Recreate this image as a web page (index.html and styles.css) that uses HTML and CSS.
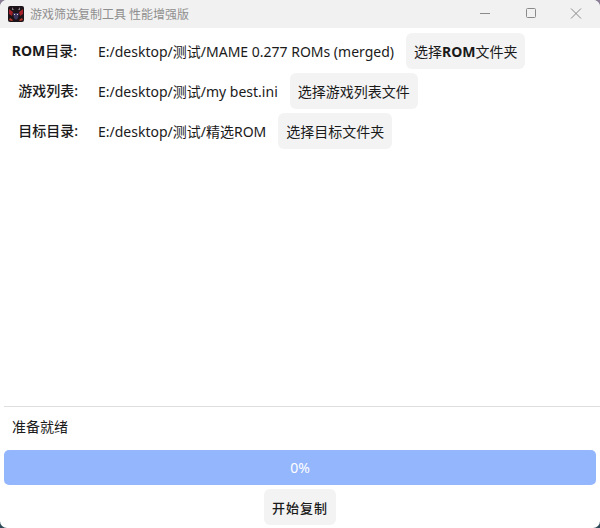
FILE: index.html
```html
<!DOCTYPE html>
<html lang="zh-CN">
<head>
  <meta charset="UTF-8" />
  <title>游戏筛选复制工具 性能增强版</title>
  <link rel="stylesheet" href="styles.css">
</head>
<body>
  <div class="window">
    <div class="titlebar">
      <svg class="app-icon" width="16" height="16" viewBox="0 0 16 16">
        <rect width="16" height="16" rx="2" fill="#1c1418"/>
        <path d="M1 3l4 3-1 4-3-2zM15 3l-4 3 1 4 3-2z" fill="#a3212a"/>
        <path d="M5 7h6l-1 5-2 2-2-2z" fill="#3b3560"/>
        <path d="M6 8h1v1H6zM9 8h1v1H9z" fill="#e8d8d0"/>
        <path d="M2 12l3 2-1 1-3-1zM14 12l-3 2 1 1 3-1z" fill="#c0392b"/>
        <path d="M4 1l2 3H4zM12 1l-2 3h2z" fill="#8d8088"/>
      </svg>
      <span class="title">游戏筛选复制工具 性能增强版</span>
      <div class="win-controls">
        <svg width="46" height="28" viewBox="0 0 46 28"><path d="M18 13.500h10" stroke="#8a8a8a"/></svg>
        <svg width="46" height="28" viewBox="0 0 46 28"><rect x="18.500" y="8.500" width="9" height="9" rx="1" fill="none" stroke="#8a8a8a"/></svg>
        <svg width="46" height="28" viewBox="0 0 46 28"><path d="M17 8.500l10 10M27 8.500l-10 10" stroke="#8a8a8a" fill="none"/></svg>
      </div>
    </div>

    <div class="content">
      <div class="row">
        <span class="label label-rom"><b>ROM</b><b class="semi">目录:</b></span>
        <span class="path">E:/desktop/测试/MAME 0.277 ROMs (merged)</span>
        <button class="btn">选择<b>ROM</b>文件夹</button>
      </div>
      <div class="row">
        <span class="label semi">游戏列表:</span>
        <span class="path">E:/desktop/测试/my best.ini</span>
        <button class="btn">选择游戏列表文件</button>
      </div>
      <div class="row">
        <span class="label semi">目标目录:</span>
        <span class="path">E:/desktop/测试/精选ROM</span>
        <button class="btn">选择目标文件夹</button>
      </div>
    </div>

    <div class="footer">
      <div class="status">准备就绪</div>
      <div class="progress">0%</div>
      <button class="btn btn-start">开始复制</button>
    </div>
  </div>
</body>
</html>
```

FILE: styles.css
```css
html, body {
  margin: 0;
  height: 100%;
}
body {
  background: linear-gradient(#8a7f96 0, #8a7f96 50%, #2c4a58 50%, #2c4a58 100%);
  font-family: "Noto Sans", "Noto Sans CJK SC", sans-serif;
  font-size: 14px;
  color: #1a1a1a;
}
.window {
  height: 528px;
  display: flex;
  flex-direction: column;
  background: #fff;
  border-radius: 7px;
  overflow: hidden;
}
.titlebar {
  height: 28px;
  flex: none;
  display: flex;
  align-items: center;
  background: #f1f1f1;
  padding-left: 8px;
}
.app-icon {
  flex: none;
}
.title {
  margin-left: 6px;
  font-size: 12px;
  color: #8f8f8f;
}
.win-controls {
  margin-left: auto;
  display: flex;
}
.win-controls svg {
  display: block;
}
.content {
  flex: 1;
  padding-top: 5px;
  display: flex;
  flex-direction: column;
  gap: 4px;
}
.row {
  display: flex;
  align-items: center;
  height: 36px;
}
.label {
  width: 78px;
  flex: none;
  text-align: right;
  margin-top: -3px;
}
.label-rom {
  width: 77px;
  margin-right: 1px;
}
.semi {
  font-weight: 500;
}
.path {
  margin-left: 20px;
  margin-right: 12px;
  margin-top: -1px;
}
.btn {
  height: 36px;
  padding: 0 8px;
  border: none;
  border-radius: 6px;
  background: #f3f3f3;
  font: inherit;
  color: inherit;
}
.footer {
  margin-left: 4px;
  border-top: 1px solid #dedede;
  display: flex;
  flex-direction: column;
}
.status {
  padding-left: 8px;
  height: 43px;
  line-height: 40px;
}
.progress {
  margin-right: 4px;
  height: 35px;
  line-height: 35px;
  text-align: center;
  background: #94b6fd;
  border-radius: 5px;
  color: #fff;
}
.btn-start {
  align-self: center;
  margin: 4px 4px 3px 0;
  width: 72px;
  padding: 0;
  font-size: 13px;
  font-weight: 500;
  letter-spacing: 1px;
}
```
